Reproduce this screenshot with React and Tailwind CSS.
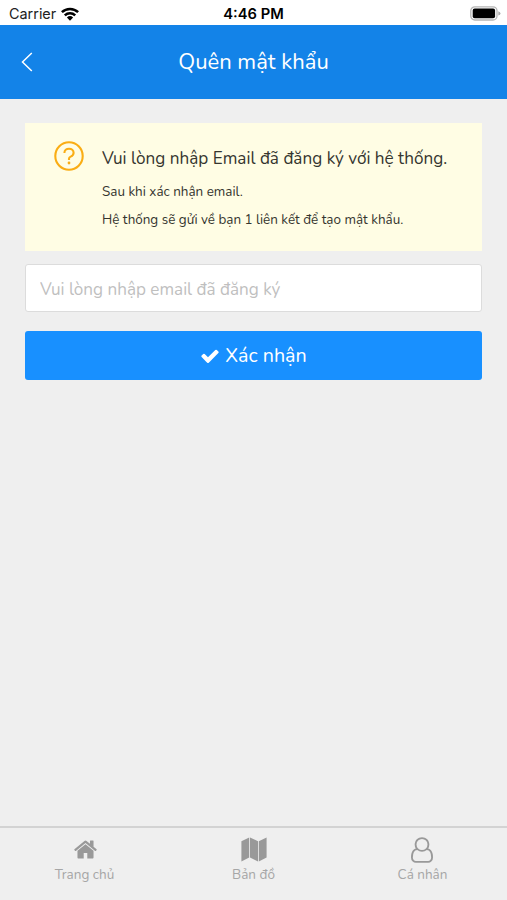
import { useState } from "react";

const HomeIcon = () => (
  <svg viewBox="0 0 1792 1792" fill="currentColor" className="ml-px size-[25px]">
    <path d="M1472 992v480q0 26-19 45t-45 19h-384v-384h-256v384h-384q-26 0-45-19t-19-45v-480q0-1 .5-3t.5-3l575-474 575 474q1 2 1 6zm223-69l-62 74q-8 9-21 11h-3q-13 0-21-7l-692-577-692 577q-12 8-24 7-13-2-21-11l-62-74q-8-10-7-23.5t11-21.5l719-599q32-26 76-26t76 26l244 204v-195q0-14 9-23t23-9h192q14 0 23 9t9 23v408l219 182q10 8 11 21.5t-7 23.5z" />
  </svg>
);

const MapIcon = () => (
  <svg viewBox="0 0 26 25" fill="currentColor" className="h-[25px] w-[26px]">
    <path d="M.4 4.2 8.2.4v20.2L.4 24.6ZM9 .4l8 3.8v20.4l-8-4ZM17.8 4.2 25.6.4v20.2l-7.8 4Z" />
  </svg>
);

const UserIcon = () => (
  <svg viewBox="0 0 1536 1792" fill="currentColor" className="mr-px h-[26px] w-[22px]">
    <path d="M1201 784q47 14 89.5 38t89 73 79.5 115.5 55 172 22 236.5q0 154-100 263.5t-241 109.5h-854q-141 0-241-109.5t-100-263.5q0-131 22-236.5t55-172 79.5-115.5 89-73 89.5-38q-79-125-79-272 0-104 40.5-198.5t109.5-163.5 163.5-109.5 198.5-40.5 198.5 40.5 163.5 109.5 109.5 163.5 40.5 198.5q0 147-79 272zm-433-656q-159 0-271.5 112.5t-112.5 271.5 112.5 271.5 271.5 112.5 271.5-112.5 112.5-271.5-112.5-271.5-271.5-112.5zm427 1536q88 0 150.5-71.5t62.5-173.5q0-239-78.5-377t-225.5-145q-145 127-336 127t-336-127q-147 7-225.5 145t-78.5 377q0 102 62.5 173.5t150.5 71.5h854z" />
  </svg>
);

const tabs = [
  { label: "Trang chủ", icon: HomeIcon },
  { label: "Bản đồ", icon: MapIcon },
  { label: "Cá nhân", icon: UserIcon },
];

const StatusBar = () => (
  <div className="grid h-[25px] shrink-0 grid-cols-3 items-center bg-white pt-0.5 pl-[9px] pr-[6px] font-['Inter',sans-serif] text-[14.4px] leading-none text-[#222]">
    <div className="flex items-center gap-[5px]">
      <span className="pt-[2px]">Carrier</span>
      <svg viewBox="0 0 18 14" fill="none" stroke="#000" strokeWidth="2.5" className="h-[14px] w-[18px]">
        <path d="M.9 5.2a11.6 11.6 0 0 1 16.2 0M3.8 8.3a7.5 7.5 0 0 1 10.4 0" />
        <path d="M5.9 10.4a4.5 4.5 0 0 1 6.2 0L9 13.8Z" fill="#000" stroke="none" />
      </svg>
    </div>
    <span className="pt-[2px] pr-[3px] text-center text-[14.7px] font-semibold text-black">4:46 PM</span>
    <svg viewBox="0 0 31 15" className="h-[15px] w-[31px] justify-self-end">
      <rect x="0.8" y="0.8" width="26.2" height="13.2" rx="4" fill="#fff" stroke="#b5b5b5" strokeWidth="1.3" />
      <rect x="2.7" y="2.6" width="22.4" height="9.6" rx="2" fill="#000" />
      <path d="M28.3 5.2q2.2.7 2.2 2.2t-2.2 2.2Z" fill="#aaa" />
    </svg>
  </div>
);

const App = () => {
  const [email, setEmail] = useState("");

  return (
    <div className="flex h-[900px] w-[507px] flex-col overflow-hidden bg-[#efefef] font-['Nunito','Noto_Sans',sans-serif] whitespace-nowrap">
      <StatusBar />
      <header className="grid h-[74px] shrink-0 grid-cols-[50px_1fr_50px] items-center bg-[#1383e8] text-white">
        <button type="button" aria-label="Quay lại" className="-mt-px pl-[21px]">
          <svg viewBox="0 0 12 20" fill="none" stroke="currentColor" strokeWidth="1.5" className="h-5 w-3">
            <path d="M10.8 1 1.5 10l9.3 9" />
          </svg>
        </button>
        <h1 className="text-center text-[22px] leading-7">Quên mật khẩu</h1>
      </header>

      <main className="flex-1 px-[25px] pt-[24px]">
        <section className="flex h-[128px] bg-[#fffde4] pl-[29px] text-[#35352f]">
          <svg viewBox="0 0 30 30" fill="none" stroke="#faad14" strokeWidth="2.1" className="mt-[18px] size-[30px] shrink-0">
            <circle cx="15" cy="15" r="13.7" />
            <path d="M10.4 11.9c0-2.5 2-4.1 4.6-4.1s4.6 1.6 4.6 4c0 1.9-1.2 3.1-2.9 3.8-1.2.5-1.7 1.1-1.7 2.2v1.1" />
            <circle cx="15" cy="22" r="1.4" fill="#faad14" stroke="none" />
          </svg>
          <div className="pt-[24px] pl-[18px]">
            <h2 className="text-[17.15px] leading-6">Vui lòng nhập Email đã đăng ký với hệ thống.</h2>
            <p className="mt-[7px] text-[13.45px] leading-7">Sau khi xác nhận email.</p>
            <p className="text-[13.45px] leading-7">Hệ thống sẽ gửi về bạn 1 liên kết để tạo mật khẩu.</p>
          </div>
        </section>

        <input
          type="email"
          value={email}
          onChange={(e) => setEmail(e.target.value)}
          placeholder="Vui lòng nhập email đã đăng ký"
          className="mt-[13px] block h-[48px] w-full rounded-[3px] border border-[#dcdcdc] bg-white px-[14px] pt-[2px] text-[17.1px] text-[#333] outline-none placeholder:text-[#bfbfbf]"
        />
        <button
          type="button"
          className="mt-[19px] flex h-[49px] w-full items-center justify-center gap-[5px] rounded-[3px] bg-[#1890ff] text-[19.7px] text-white"
        >
          <svg viewBox="0 0 1792 1792" fill="currentColor" className="size-5">
            <path d="M1671 566q0 40-28 68l-724 724-136 136q-28 28-68 28t-68-28l-136-136-362-362q-28-28-28-68t28-68l136-136q28-28 68-28t68 28l294 295 656-657q28-28 68-28t68 28l136 136q28 28 28 68z" />
          </svg>
          <span className="pt-px">Xác nhận</span>
        </button>
      </main>

      <nav className="grid h-[74px] shrink-0 grid-cols-3 border-t-2 border-[#d3d3d3] text-[#999]">
        {tabs.map(({ label, icon: Icon }) => (
          <a key={label} href="#" className="flex flex-col items-center pt-[8px]">
            <span className="flex h-[27px] items-center">
              <Icon />
            </span>
            <span className="mt-[2px] text-[13.5px] leading-5 text-[#a6a6a6]">{label}</span>
          </a>
        ))}
      </nav>
    </div>
  );
};

export default App;
